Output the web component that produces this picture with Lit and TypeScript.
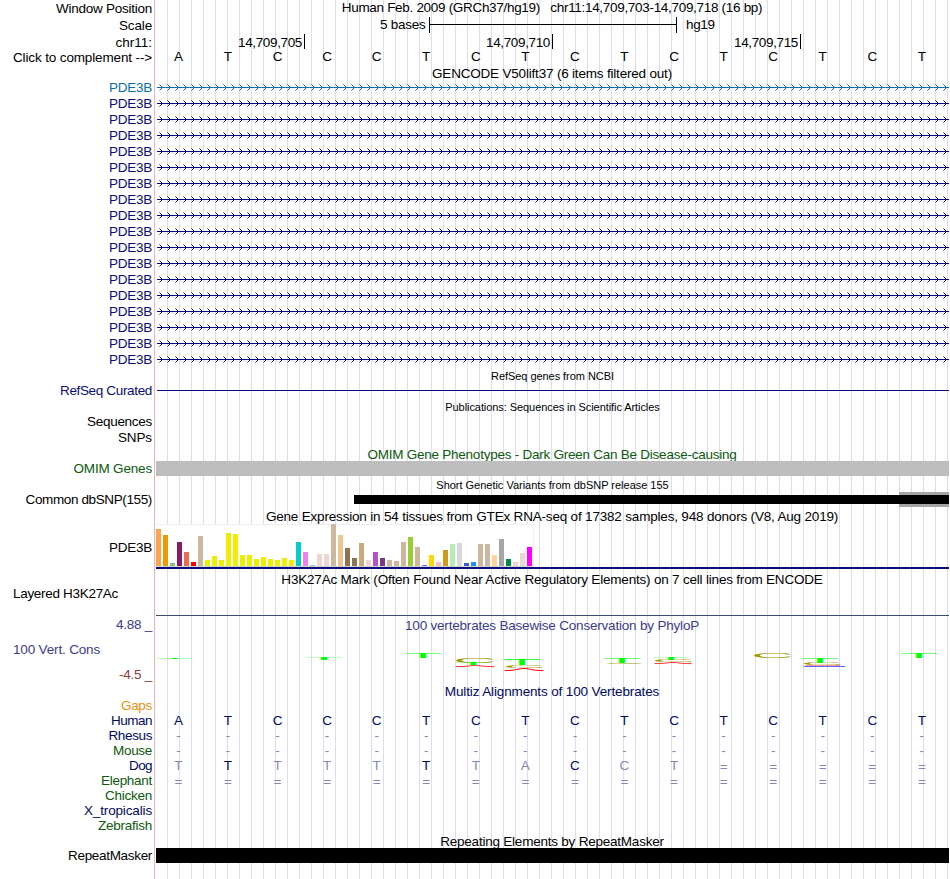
import { LitElement, html, svg, css, nothing } from "lit";
import { customElement } from "lit/decorators.js";
import { styleMap } from "lit/directives/style-map.js";

const FAMILY = '"Liberation Sans", Arial, Helvetica, sans-serif';
const NAVY = "#0c0c78";
const GREEN = "#0c5a0c";
const PALE = "#8587b8";
const SIZE = 13.5;

const pen = document.createElement("canvas").getContext("2d")!;

/** Letter spacing that makes a text run as wide as its slot. */
function tracking(text: string, width: number, size = SIZE): string {
  pen.font = `${size}px ${FAMILY}`;
  return ((width - pen.measureText(text).width) / text.length).toFixed(3) + "px";
}

type Label = { text: string; width: number; top: number; color?: string };

const label = (l: Label) => html`<span
  class="label"
  style=${styleMap({
    letterSpacing: tracking(l.text, l.width),
    marginTop: `${l.top}px`,
    color: l.color ?? "#000",
  })}
  >${l.text}</span
>`;

const title = (text: string, width: number, top: number, color = "#000", size = SIZE) => html`<div
  class="title ${size === 11 ? "small" : ""}"
  style=${styleMap({ letterSpacing: tracking(text, width, size), paddingTop: `${top}px`, color })}
>
  <span>${text}</span>
</div>`;

const row = (height: number, left: unknown, right: unknown) => html`<div
  class="row"
  style=${styleMap({ height: `${height}px` })}
>
  <div class="side">${left}</div>
  <div class="track">${right}</div>
</div>`;

const cells = (seq: string, strong: string | null, color: string) => html`<div class="bases">
  ${[...seq].map((b, i) => {
    const on = strong === null || strong[i] === "1";
    return html`<span class=${b === "=" ? "eq" : ""} style=${styleMap({ color: on ? color : PALE })}>${b}</span>`;
  })}
</div>`;

const gene = (color: string, id: number) => html`<svg class="gene" width="793" height="16" shape-rendering="crispEdges">
  <defs>
    <pattern id="p${id}" x="3" y="0" width="8" height="16" patternUnits="userSpaceOnUse">
      <g fill=${color}>
        <rect x="0" y="5" width="1" height="1" opacity=".5" />
        <rect x="1" y="6" width="1" height="1" />
        <rect x="2" y="7" width="1" height="1" />
        <rect x="3" y="8" width="1" height="1" />
        <rect x="2" y="9" width="1" height="1" />
        <rect x="1" y="10" width="1" height="1" />
        <rect x="0" y="11" width="1" height="1" opacity=".5" />
      </g>
    </pattern>
  </defs>
  <rect x="1" y="8" width="792" height="1" fill=${color} />
  <rect x="3" y="0" width="790" height="16" fill="url(#p${id})" />
</svg>`;

const TISSUES: [string, number][] = [
  ["#ffa54f", 37], ["#ee9a00", 31], ["#8fbc8f", 3], ["#8b1c62", 24], ["#ee6a50", 14], ["#ff0000", 4],
  ["#cdb79e", 30], ["#eeee00", 6], ["#eeee00", 10], ["#eeee00", 6], ["#eeee00", 33], ["#eeee00", 32],
  ["#eeee00", 11], ["#eeee00", 11], ["#eeee00", 7], ["#eeee00", 9], ["#eeee00", 7], ["#eeee00", 6],
  ["#eeee00", 8], ["#eeee00", 6], ["#00cdcd", 24], ["#ee82ee", 14], ["#9ac0cd", 1], ["#eed5d2", 12],
  ["#eed5d2", 12], ["#cdb79e", 42], ["#eec591", 31], ["#8b7355", 18], ["#8b7355", 8], ["#cdaa7d", 23],
  ["#eed5d2", 6], ["#b452cd", 14], ["#7a378b", 8], ["#cdb79e", 6], ["#cdb79e", 5], ["#cdb79e", 24],
  ["#9acd32", 29], ["#cdb79e", 19], ["#7a67ee", 1], ["#ffd700", 11], ["#ffb6c1", 4], ["#cd9b1d", 16],
  ["#b4eeb4", 22], ["#d9d9d9", 23], ["#3a5fcd", 3], ["#1e90ff", 4], ["#cdb79e", 22], ["#cdb79e", 22],
  ["#ffd39b", 11], ["#a6a6a6", 27], ["#008b45", 7], ["#eed5d2", 4], ["#eed5d2", 13], ["#ff00ff", 19],
];

/** Ink extents of the logo letters, in hundredths of an em. */
const INK: Record<string, [number, number]> = { T: [2.1, 59], C: [5, 69] };
const INK_COLOR: Record<string, string> = { T: "#00ff00", C: "#a09a00" };

/** Letter, left, right, top and bottom inside the conservation track. */
const LOGO: [string, number, number, number, number][] = [
  ["T", 1, 36.5, 25, 26.2],
  ["T", 150, 186, 25, 26.8],
  ["T", 249, 285, 20, 25],
  ["C", 300, 339, 25, 30],
  ["T", 299, 335, 30, 32],
  ["T", 348, 384, 25.4, 32],
  ["C", 350, 388, 32, 35],
  ["T", 448, 484, 25, 30],
  ["C", 450.5, 487.5, 30, 31],
  ["T", 497, 533, 25, 27],
  ["C", 499, 537.5, 27, 29],
  ["C", 598, 636.5, 20, 25],
  ["T", 646, 682, 25, 30],
  ["C", 648, 686, 30, 32],
  ["T", 745, 781, 20, 25],
];

/** Low scores, too flat for a letter: left, right, crest, foot, colour, strength. */
const BOWS: [number, number, number, number, string, number][] = [
  [300, 338.5, 32.5, 33.6, "#ff0000", 0.8],
  [348.5, 387.5, 35.5, 37.6, "#ff0000", 1],
  [498.5, 535.5, 29.5, 30.6, "#ff0000", 0.8],
  [650, 684, 32.5, 32.5, "#ff4040", 0.6],
  [648, 689, 33.5, 33.5, "#4848ff", 0.9],
];

const SEQ = "ATCCCTCTCTCTCTCT";

@customElement("app-root")
export class AppRoot extends LitElement {
  static styles = css`
    :host {
      display: block;
      width: 950px;
      height: 879px;
      overflow: hidden;
      background: #fff;
      font: 13.5px/15px "Liberation Sans", Arial, Helvetica, sans-serif;
      color: #000;
    }
    .browser {
      width: 949px;
      height: 879px;
      background:
        linear-gradient(#ffb0b0, #ffb0b0) 154px 0 / 1px 100% no-repeat,
        repeating-linear-gradient(90deg, #dcdcf8 0 1px, transparent 1px 12px) 167px 0 / 782px 100% no-repeat;
    }
    .row {
      display: grid;
      grid-template-columns: 152px 793px;
      column-gap: 4px;
    }
    .side {
      display: flex;
      flex-direction: column;
      align-items: flex-end;
    }
    .label,
    .title {
      white-space: pre;
    }
    .left {
      align-self: flex-start;
      padding-left: 13px;
    }
    .left.lower {
      padding-top: 9px;
    }
    .title {
      display: flex;
      justify-content: center;
      padding-right: 1px;
    }
    .title.small {
      font-size: 11px;
      line-height: 13px;
      padding-right: 0;
    }
    .bases {
      display: grid;
      grid-template-columns: repeat(16, 1fr);
      margin-left: -2.4px;
      width: 793px;
      text-align: center;
    }
    .eq {
      padding-top: 1px;
    }
    svg {
      display: block;
      overflow: hidden;
    }
    .scale {
      display: grid;
      grid-template-columns: 269.5px 248px 1fr;
      height: 16px;
    }
    .scale .from {
      text-align: right;
    }
    .rule {
      margin-left: 3.5px;
      margin-right: -3.5px;
      border: solid #000;
      border-width: 0 1px;
      box-sizing: border-box;
      background: linear-gradient(#000, #000) 0 7px / 100% 1px no-repeat;
    }
    .scale .to {
      padding-left: 12.5px;
    }
    .ticks {
      display: grid;
      grid-template-columns: 149px 248px 248px;
      height: 15px;
    }
    .ticks span {
      border-right: 1px solid #000;
      padding: 1px 2px 0 0;
      line-height: 15px;
      height: 14px;
      text-align: right;
    }
    .line {
      height: 1px;
      margin: 8px 0 0 1px;
      background: #0c0c78;
    }
    .omim {
      height: 15px;
      background: #bebebe;
    }
    .snps {
      display: grid;
      grid-template: 15px / 198px 545px 50px;
      align-items: center;
    }
    .snps .block {
      height: 9px;
      background: #000;
    }
    .snps .end {
      height: 9px;
      background: #000;
      border: solid #a5a5a5;
      border-width: 3px 0;
    }
    .gtex {
      height: 43px;
      border-bottom: 2px solid #0c0c78;
    }
    .bars {
      display: flex;
      align-items: flex-end;
      gap: 2px;
      box-sizing: border-box;
      width: 378px;
      height: 43px;
      background:
        linear-gradient(#f0f0f0, #f0f0f0) 0 0 / 100% 1px no-repeat,
        linear-gradient(#f0f0f0, #f0f0f0) 100% 0 / 1px 100% no-repeat,
        #fff;
      border-bottom: 1px solid #d0d4d0;
    }
    .bar {
      width: 5px;
    }
    .h3k {
      height: 29px;
      border-bottom: 1px solid #3b4d6e;
    }
    .logo {
      font-size: 100px;
      line-height: 1;
    }
    .mask {
      height: 15px;
      background: #000;
    }
  `;

  render() {
    const species: [string, number, string, unknown][] = [
      ["Gaps", 31, "#ee8e0c", nothing],
      ["Human", 41, "#000a64", cells(SEQ, null, "#000a64")],
      ["Rhesus", 43.5, "#000a64", cells("-".repeat(16), "", PALE)],
      ["Mouse", 39, GREEN, cells("-".repeat(16), "", PALE)],
      ["Dog", 23, "#000a64", cells("TTTTTTTACCT=====", "0100010010000000", "#000a64")],
      ["Elephant", 51, GREEN, cells("=".repeat(16), "", PALE)],
      ["Chicken", 47, GREEN, nothing],
      ["X_tropicalis", 68, "#000a64", nothing],
      ["Zebrafish", 54, GREEN, nothing],
    ];
    const position = (t: string) => html`<span style=${styleMap({ letterSpacing: tracking(t, 64) })}>${t}</span>`;

    return html`<div class="browser">
      ${row(17, label({ text: "Window Position", width: 96, top: 1 }),
        title("Human Feb. 2009 (GRCh37/hg19)   chr11:14,709,703-14,709,718 (16 bp)", 420.5, 0))}
      ${row(17, label({ text: "Scale", width: 33, top: 1 }),
        html`<div class="scale">
          <span class="from" style=${styleMap({ letterSpacing: tracking("5 bases", 45.5) })}>5 bases</span>
          <div class="rule"></div>
          <span class="to" style=${styleMap({ letterSpacing: tracking("hg19", 28.5) })}>hg19</span>
        </div>`)}
      ${row(15, label({ text: "chr11:", width: 36.5, top: 1 }),
        html`<div class="ticks">${["14,709,705", "14,709,710", "14,709,715"].map(position)}</div>`)}
      ${row(17, label({ text: "Click to complement -->", width: 139, top: 1 }), cells(SEQ, null, "#000"))}
      ${row(13, nothing, title("GENCODE V50lift37 (6 items filtered out)", 240, 0))}
      ${Array.from({ length: 18 }, (_, i) => {
        const color = i === 0 ? "#0c6eaa" : NAVY;
        return row(16, label({ text: "PDE3B", width: 43, top: 1, color }), gene(color, i));
      })}
      ${row(15, nothing, title("RefSeq genes from NCBI", 123, 3, "#000", 11))}
      ${row(16, label({ text: "RefSeq Curated", width: 92, top: 1, color: NAVY }), html`<div class="line"></div>`)}
      ${row(15, nothing, title("Publications: Sequences in Scientific Articles", 215, 3, "#000", 11))}
      ${row(16, label({ text: "Sequences", width: 65, top: 1 }), nothing)}
      ${row(16, label({ text: "SNPs", width: 34, top: 1 }), nothing)}
      ${row(16, nothing, title("OMIM Gene Phenotypes - Dark Green Can Be Disease-causing", 369, 2, GREEN))}
      ${row(15, label({ text: "OMIM Genes", width: 78.5, top: 0, color: GREEN }), html`<div class="omim"></div>`)}
      ${row(16, nothing, title("Short Genetic Variants from dbSNP release 155", 232.5, 3, "#000", 11))}
      ${row(15, label({ text: "Common dbSNP(155)", width: 126.5, top: 0 }),
        html`<div class="snps"><i></i><div class="block"></div><div class="end"></div></div>`)}
      ${row(17, nothing,
        title("Gene Expression in 54 tissues from GTEx RNA-seq of 17382 samples, 948 donors (V8, Aug 2019)", 573, 2))}
      ${row(45, label({ text: "PDE3B", width: 43, top: 16 }),
        html`<div class="gtex">
          <div class="bars">
            ${TISSUES.map(([c, h]) => html`<div class="bar" style=${styleMap({ height: `${h}px`, background: c })}></div>`)}
          </div>
        </div>`)}
      ${row(17, nothing,
        title("H3K27Ac Mark (Often Found Near Active Regulatory Elements) on 7 cell lines from ENCODE", 542, 3))}
      ${row(30, html`<div class="left">${label({ text: "Layered H3K27Ac", width: 105, top: 0 })}</div>`,
        html`<div class="h3k"></div>`)}
      ${row(17, label({ text: "4.88 _", width: 36, top: 1, color: "#3c3c8c" }),
        title("100 vertebrates Basewise Conservation by PhyloP", 294, 2, "#3c3c8c"))}
      ${row(51,
        html`<div class="left lower">${label({ text: "100 Vert. Cons", width: 87, top: 0, color: "#3c3c8c" })}</div>
          ${label({ text: "-4.5 _", width: 33, top: 10, color: "#8c3c3c" })}`,
        html`<svg class="logo" width="793" height="51">
          ${LOGO.map(([ch, x0, x1, y0, y1]) => {
            const [a, b] = INK[ch];
            const sx = (x1 - x0) / (b - a);
            const sy = (y1 - y0) / 68.8;
            return svg`<text fill=${INK_COLOR[ch]} transform="translate(${x0 - a * sx} ${y1}) scale(${sx} ${sy})">${ch}</text>`;
          })}
          ${BOWS.map(([x0, x1, top, foot, color, strength]) => {
            const w = (x1 - x0) / 3;
            return svg`<path fill="none" stroke=${color} stroke-opacity=${strength}
              d="M${x0} ${foot}C${x0 + w} ${foot} ${x0 + w} ${top} ${(x0 + x1) / 2} ${top}S${x1 - w} ${foot} ${x1} ${foot}" />`;
          })}
        </svg>`)}
      ${row(14, nothing, title("Multiz Alignments of 100 Vertebrates", 215, 0, "#000a64"))}
      ${species.map(([text, width, color, body]) => row(15, label({ text, width, top: 0, color }), body))}
      ${row(15, nothing, title("Repeating Elements by RepeatMasker", 223.5, 1))}
      ${row(15, label({ text: "RepeatMasker", width: 84, top: 0 }), html`<div class="mask"></div>`)}
    </div>`;
  }
}
